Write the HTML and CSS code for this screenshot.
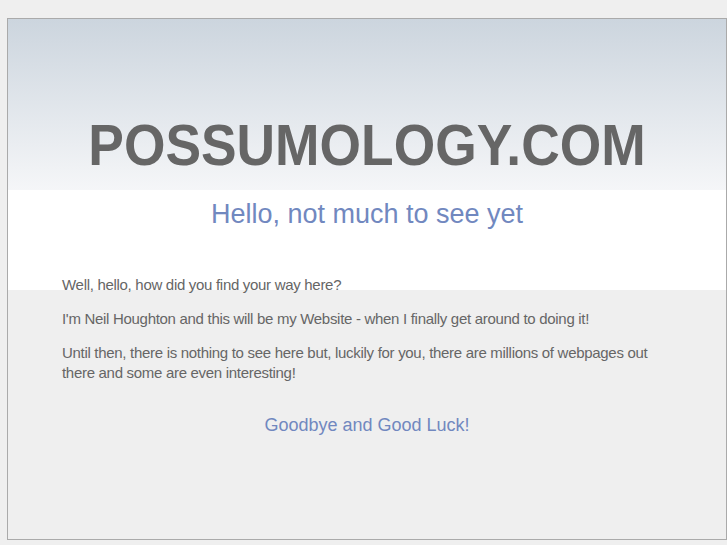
FILE: index.html
```html
<!DOCTYPE html>
<html lang="en">
<head>
  <meta charset="UTF-8">
  <title>Possumology.com</title>
  <link rel="stylesheet" href="styles.css">
</head>
<body>
  <div class="container">
    <div class="header">
      <h1>POSSUMOLOGY.COM</h1>
      <h2>Hello, not much to see yet</h2>
    </div>

    <div class="content">
      <p>Well, hello, how did you find your way here?</p>
      <p>I'm Neil Houghton and this will be my Website - when I finally get around to doing it!</p>
      <p>Until then, there is nothing to see here but, luckily for you, there are millions of webpages out there and some are even interesting!</p>
      <p class="bye">Goodbye and Good Luck!</p>
    </div>
  </div>
</body>
</html>
```

FILE: styles.css
```css
body {
  font-family: 'Liberation Sans', Arial, sans-serif;
  margin: 0;
  padding: 18px 0 0 7px;
  background-color: #efefef;
}
.container {
  width: 718px;
  min-height: 520px;
  border: 1px solid #aaa;
  background: linear-gradient(#ccd5de 0, #f5f6f8 171px, #fff 171px, #fff 271px, #efefef 271px);
}
.header {
  padding-top: 97px;
  text-align: center;
}
h1 {
  margin: 0;
  font-size: 58px;
  line-height: 58px;
  color: #666;
  transform: scaleX(0.92);
}
h2 {
  margin: 25px 0 0;
  font-size: 27px;
  line-height: 30px;
  font-weight: normal;
  color: #7188bf;
}
.content {
  padding: 46px 54px 0;
  color: #666;
  font-size: 15px;
  line-height: 20px;
  letter-spacing: -0.3px;
}
.content p {
  margin: 0 0 14px;
}
.bye {
  text-align: center;
  font-size: 18px;
  letter-spacing: 0;
  color: #7188bf;
  padding-top: 18px;
}
```
